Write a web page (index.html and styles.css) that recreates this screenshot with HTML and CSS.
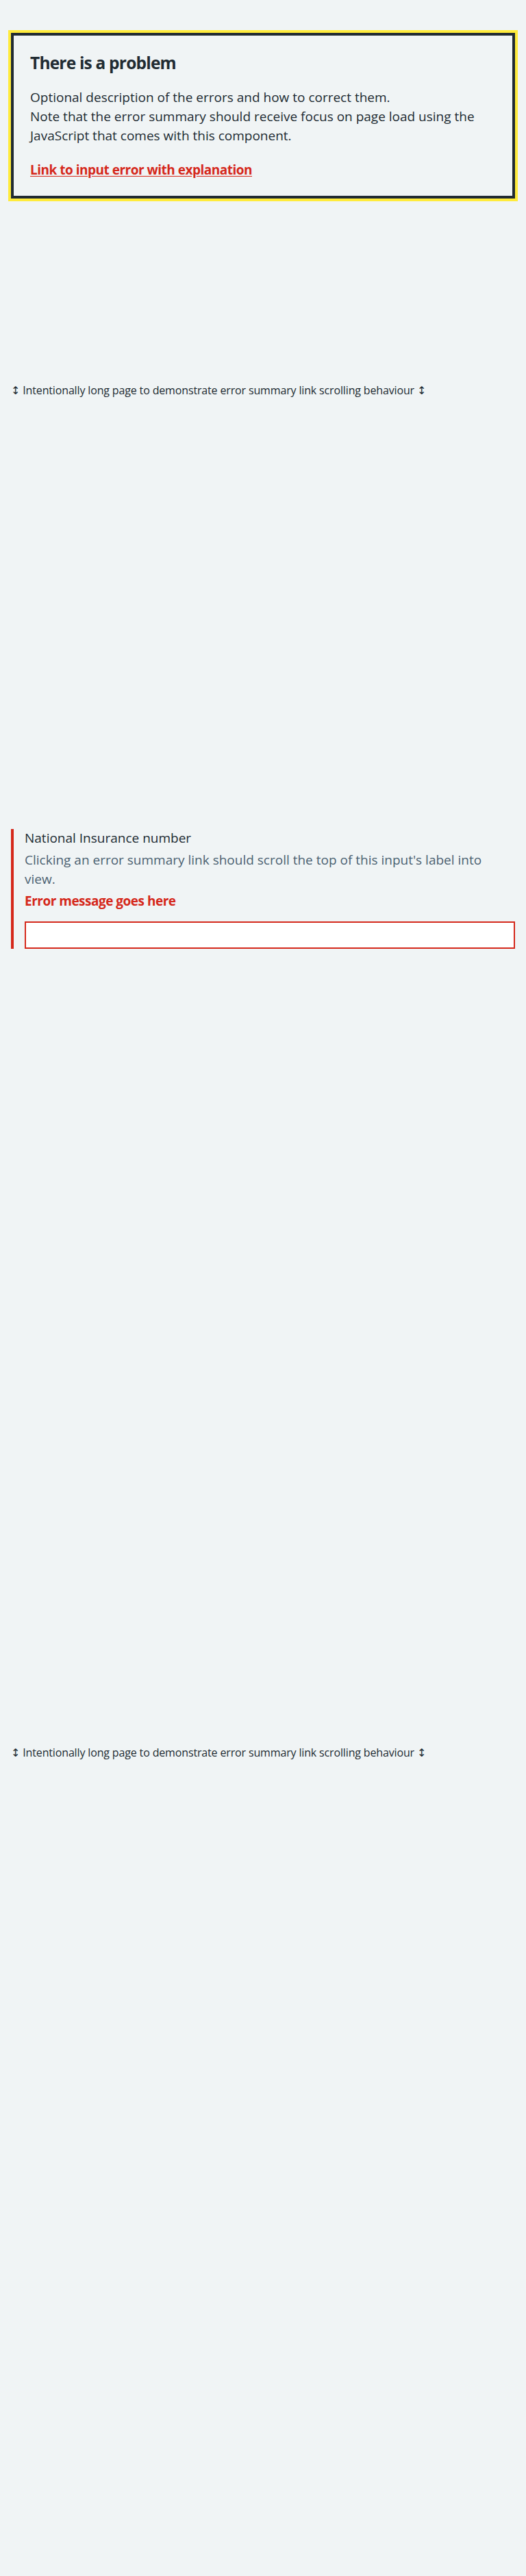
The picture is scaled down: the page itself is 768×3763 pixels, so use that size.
FILE: index.html
```html
<!DOCTYPE html>
<html lang="en">
<head>
<meta charset="utf-8">
<title>Error summary</title>
<link rel="stylesheet" href="styles.css">
</head>
<body>
<main class="page">
  <div class="error-summary" tabindex="-1" role="alert">
    <h2 class="error-summary__title">There is a problem</h2>
    <div class="error-summary__body">
      <p class="error-summary__text">Optional description of the errors and how to correct them.<br>Note that the error summary should receive focus on page load using the JavaScript that comes with this component.</p>
      <ul class="error-summary__list">
        <li><a class="error-summary__link" href="#ni-number">Link to input error with explanation</a></li>
      </ul>
    </div>
  </div>

  <div class="long long--first">
    <p class="long__text"><span class="arrow">↕</span> Intentionally long page to demonstrate error summary link scrolling behaviour <span class="arrow">↕</span></p>
  </div>

  <div class="form-group form-group--error">
    <label class="label" for="ni-number">National Insurance number</label>
    <div class="hint">Clicking an error summary link should scroll the top of this input's label into view.</div>
    <span class="error-message">Error message goes here</span>
    <input class="input input--error" id="ni-number" type="text">
  </div>

  <div class="long long--second">
    <p class="long__text"><span class="arrow">↕</span> Intentionally long page to demonstrate error summary link scrolling behaviour <span class="arrow">↕</span></p>
  </div>
</main>
</body>
</html>
```

FILE: styles.css
```css
html, body {
  margin: 0;
  padding: 0;
  background: #f0f4f5;
}

body {
  font-family: "Open Sans", "Liberation Sans", Arial, sans-serif;
  color: #212b32;
  font-size: 19px;
  line-height: 28px;
}

.page {
  display: block;
  padding: 48px 16px 0;
}

.error-summary {
  border: 4px solid #212b32;
  outline: 4px solid #ffeb3b;
  outline-offset: 0;
  padding: 24px;
}

.error-summary__title {
  margin: 0 0 20px;
  font-size: 24.5px;
  line-height: 32px;
  font-weight: 700;
  letter-spacing: -0.8px;
}

.error-summary__text {
  margin: 0 0 22px;
}

.error-summary__list {
  list-style: none;
  margin: 0;
  padding: 0;
}

.error-summary__link {
  color: #d5281b;
  font-weight: 700;
  letter-spacing: -0.5px;
  text-decoration: underline;
  text-underline-offset: 2px;
}

.long {
  display: block;
}

.long--first {
  padding: 268px 0 628px;
}

.long--second {
  padding: 1162px 0 1190px;
}

.long__text {
  margin: 0;
  font-size: 16px;
  line-height: 24px;
  letter-spacing: -0.15px;
}

.arrow {
  font-family: "DejaVu Sans", sans-serif;
}

.form-group--error {
  border-left: 4px solid #d5281b;
  padding-left: 16px;
  display: flex;
  flex-direction: column;
  align-items: flex-start;
}

.label {
  display: block;
  margin-top: -1px;
  margin-bottom: 4px;
}

.hint {
  color: #4c6272;
  margin-bottom: 4px;
}

.error-message {
  display: block;
  color: #d5281b;
  font-weight: 700;
  letter-spacing: -0.5px;
  margin-bottom: 16px;
}

.input {
  box-sizing: border-box;
  width: 100%;
  height: 40px;
  margin: 0;
  padding: 4px;
  background: #ffffff;
  border: 2px solid #4c6272;
  border-radius: 0;
  font: inherit;
}

.input--error {
  border-color: #d5281b;
}
```
